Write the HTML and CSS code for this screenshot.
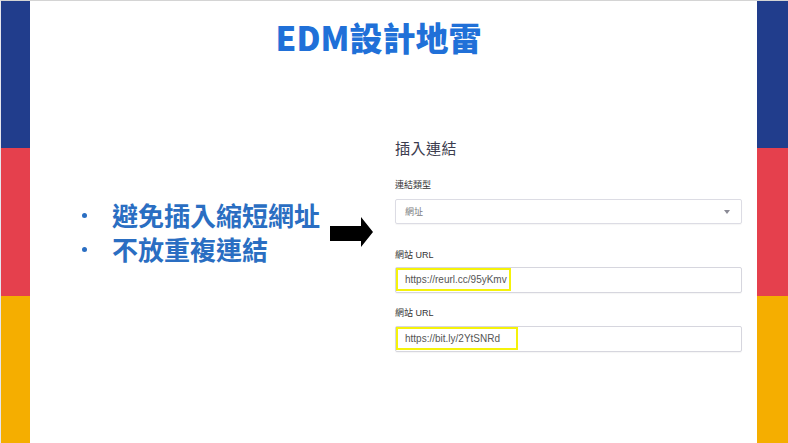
FILE: index.html
```html
<!DOCTYPE html>
<html lang="zh-Hant">
<head>
<meta charset="utf-8">
<title>EDM設計地雷</title>
<link rel="stylesheet" href="styles.css">
</head>
<body>
<div class="slide">
  <div class="stripe stripe-left">
    <div class="band blue"></div>
    <div class="band red"></div>
    <div class="band yellow"></div>
  </div>
  <main class="center">
    <h1 class="title">EDM設計地雷</h1>
    <div class="content">
      <div class="points">
        <ul class="bullets">
          <li>避免插入縮短網址</li>
          <li>不放重複連結</li>
        </ul>
        <svg class="arrow" width="44" height="31" viewBox="0 0 44 31" aria-hidden="true">
          <polygon points="0,9 31,9 31,0 43,15 31,30 31,24 0,24" fill="#000"/>
        </svg>
      </div>
      <section class="form">
        <h2 class="form-title">插入連結</h2>
        <div class="label">連結類型</div>
        <div class="select">
          <span class="select-text">網址</span>
          <span class="caret"></span>
        </div>
        <div class="label label-gap">網站 URL</div>
        <div class="input"><span class="hl hl-a">https://reurl.cc/95yKmv</span></div>
        <div class="label label-gap2">網站 URL</div>
        <div class="input"><span class="hl hl-b">https://bit.ly/2YtSNRd</span></div>
      </section>
    </div>
  </main>
  <div class="stripe stripe-right">
    <div class="band blue"></div>
    <div class="band red"></div>
    <div class="band yellow"></div>
  </div>
</div>
</body>
</html>
```
FILE: styles.css
```css
* { box-sizing: border-box; }
html, body { margin: 0; padding: 0; }
body {
  width: 788px;
  height: 443px;
  overflow: hidden;
  background: #fff;
  border-top: 1px solid #d4d4d4;
  border-left: 1px solid #e6e6ee;
  font-family: "Liberation Sans", "Noto Sans CJK TC", sans-serif;
}
.slide {
  display: grid;
  grid-template-columns: 29px 1fr 31px;
  height: 442px;
}
.stripe {
  display: flex;
  flex-direction: column;
}
.stripe .band.blue { height: 147px; background: #213d8c; }
.stripe .band.red { height: 148px; background: #e5404d; }
.stripe .band.yellow { flex: 1; background: #f5ae00; }

.center {
  display: flex;
  flex-direction: column;
  min-width: 0;
}
.title {
  margin: 18px 0 0 0;
  padding-right: 30px;
  text-align: center;
  font-family: "Noto Sans CJK TC", sans-serif;
  font-weight: 900;
  font-size: 33px;
  line-height: 36px;
  color: #2070d8;
  letter-spacing: 0;
}
.content {
  display: flex;
  margin-top: 84px;
}
.points {
  flex: 1;
  position: relative;
  padding-top: 59px;
}
.bullets {
  list-style: none;
  margin: 0;
  padding: 0 0 0 52px;
  font-family: "Noto Sans CJK TC", sans-serif;
  font-weight: 700;
  font-size: 26px;
  line-height: 34px;
  color: #2a6ec2;
}
.bullets li {
  display: flex;
  align-items: center;
  padding-left: 29px;
}
.bullets li::before {
  content: "";
  width: 5px;
  height: 5px;
  border-radius: 50%;
  background: #2a6ec2;
  margin: 0 25px 0 -29px;
  flex: none;
}
.arrow {
  position: absolute;
  left: 300px;
  top: 78px;
}
.form {
  width: 347px;
  margin-right: 15px;
  color: #333;
}
.form-title {
  margin: 0 0 23px 0;
  font-family: "Noto Sans CJK TC", sans-serif;
  font-weight: 400;
  font-size: 15px;
  line-height: 18px;
  color: #3c3c4e;
  letter-spacing: 0.5px;
}
.label {
  font-family: "Liberation Sans", "Noto Sans CJK TC", sans-serif;
  font-size: 9px;
  line-height: 11px;
  color: #333;
  margin-bottom: 8px;
}
.label-gap { margin-top: 26px; margin-bottom: 6px; }
.label-gap2 { margin-top: 15px; margin-bottom: 7px; }
.select {
  height: 25px;
  border: 1px solid #dcdce4;
  border-radius: 2px;
  box-shadow: 0 1px 1px rgba(0,0,0,0.04);
  display: flex;
  align-items: center;
  justify-content: space-between;
  padding: 0 11px 0 9px;
}
.select-text {
  font-family: "Noto Sans CJK TC", sans-serif;
  font-size: 9px;
  color: #7a7a80;
}
.caret {
  width: 0;
  height: 0;
  border-left: 3px solid transparent;
  border-right: 3px solid transparent;
  border-top: 4px solid #8a8a95;
}
.input {
  height: 26px;
  border: 1px solid #d6d6de;
  border-radius: 2px;
  box-shadow: 0 1px 1px rgba(0,0,0,0.04);
  display: flex;
  align-items: flex-start;
  padding: 0;
}
.hl {
  display: inline-flex;
  align-items: center;
  height: 23px;
  border: 2px solid #f5f20a;
  padding: 0 0 0 7px;
  font-family: "Liberation Sans", sans-serif;
  font-size: 10px;
  color: #555;
  white-space: nowrap;
}
.hl-a { width: 115px; }
.hl-b { width: 122px; }
```
